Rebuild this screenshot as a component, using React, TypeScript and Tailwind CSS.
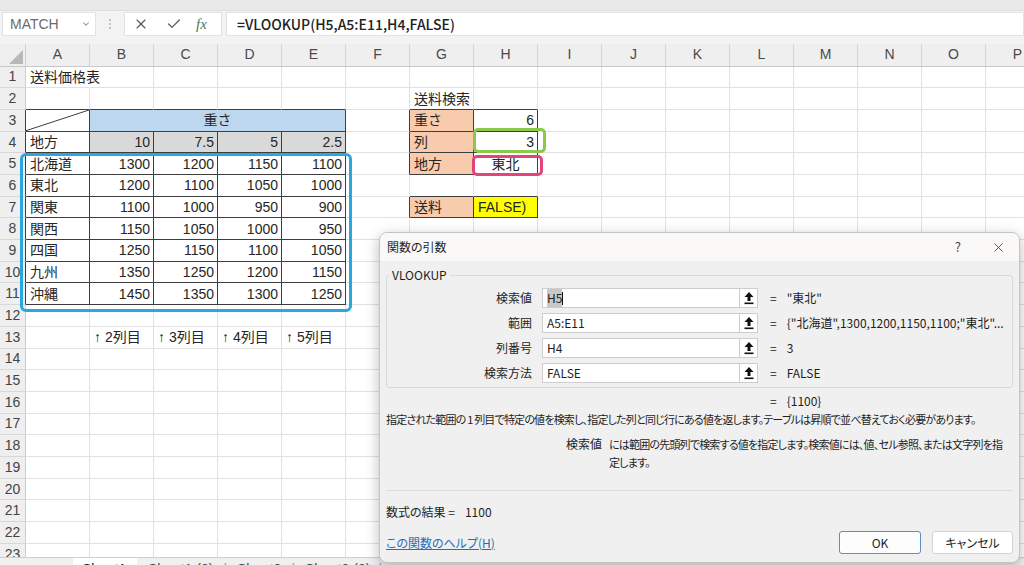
import React from 'react';
import { X, Check, ChevronDown } from 'lucide-react';

type Cell = {
  t?: string;
  span?: number;
  bg?: string;
  al?: 'l' | 'r' | 'c';
  rD?: boolean;
  bD?: boolean;
  noR?: boolean;
  diag?: boolean;
};

const regions = ['北海道', '東北', '関東', '関西', '四国', '九州', '沖縄'];
const prices = [
  [1300, 1200, 1150, 1100],
  [1200, 1100, 1050, 1000],
  [1100, 1000, 950, 900],
  [1150, 1050, 1000, 950],
  [1250, 1150, 1100, 1050],
  [1350, 1250, 1200, 1150],
  [1450, 1350, 1300, 1250],
];
const ORANGE = 'bg-[#f8cbad]';
const COLS = ['A', 'B', 'C', 'D', 'E', 'F', 'G', 'H', 'I', 'J', 'K', 'L', 'M', 'N', 'O', 'P'];

function buildRow(r: number): Cell[] {
  const cells: Cell[] = Array.from({ length: 16 }, () => ({}));
  for (let c = 0; c < 5; c++) {
    if (r >= 2 && r <= 11) cells[c].bD = true;
    if (r >= 3 && r <= 11) cells[c].rD = true;
  }
  if ([3, 4, 5, 7].includes(r)) {
    cells[5].rD = true;
    cells[6].rD = true;
    cells[7].rD = true;
  }
  if (r >= 2 && r <= 7) {
    cells[6].bD = true;
    cells[7].bD = true;
  }
  if (r === 1) {
    cells[0].t = '送料価格表';
    cells[0].noR = true;
  }
  if (r === 2) cells[6].t = '送料検索';
  if (r === 3) {
    cells[0].diag = true;
    cells[6].t = '重さ';
    cells[6].bg = ORANGE;
    cells[7].t = '6';
    cells[7].al = 'r';
  }
  if (r === 4) {
    cells[0].t = '地方';
    ['10', '7.5', '5', '2.5'].forEach((v, i) => {
      cells[i + 1].t = v;
      cells[i + 1].al = 'r';
      cells[i + 1].bg = 'bg-[#d9d9d9]';
    });
    cells[6].t = '列';
    cells[6].bg = ORANGE;
    cells[7].t = '3';
    cells[7].al = 'r';
  }
  if (r >= 5 && r <= 11) {
    cells[0].t = regions[r - 5];
    prices[r - 5].forEach((v, i) => {
      cells[i + 1].t = String(v);
      cells[i + 1].al = 'r';
    });
  }
  if (r === 5) {
    cells[6].t = '地方';
    cells[6].bg = ORANGE;
    cells[7].t = '東北';
    cells[7].al = 'c';
  }
  if (r === 7) {
    cells[6].t = '送料';
    cells[6].bg = ORANGE;
    cells[7].t = 'FALSE)';
    cells[7].bg = 'bg-[#ffff00]';
  }
  if (r === 13) {
    ['↑ 2列目', '↑ 3列目', '↑ 4列目', '↑ 5列目'].forEach((v, i) => {
      cells[i + 1].t = v;
    });
  }
  if (r === 3) {
    const merged: Cell = { t: '重さ', span: 4, bg: 'bg-[#bdd7ee]', al: 'c', rD: true, bD: true };
    cells.splice(1, 4, merged);
  }
  return cells;
}

function CellView({ c }: { c: Cell }) {
  const w = c.span === 4 ? 'w-[256px]' : 'w-[64px]';
  const br = c.rD ? 'border-r-[#3e3e3e]' : c.noR ? 'border-r-transparent' : 'border-r-[#e1e1e1]';
  const bb = c.bD ? 'border-b-[#3e3e3e]' : 'border-b-[#e1e1e1]';
  const al = c.al === 'r' ? 'justify-end pr-[3px]' : c.al === 'c' ? 'justify-center' : 'justify-start pl-[4px]';
  return (
    <div className={`relative shrink-0 h-full flex items-center whitespace-nowrap border-r border-b ${w} ${br} ${bb} ${c.bg ?? ''} ${al}`}>
      {c.diag && (
        <svg className="absolute inset-0 w-full h-full" viewBox="0 0 64 21" preserveAspectRatio="none">
          <line x1="0" y1="21" x2="64" y2="0" stroke="#3e3e3e" strokeWidth="1" vectorEffect="non-scaling-stroke" />
        </svg>
      )}
      {c.t && <span className="leading-none">{c.t}</span>}
    </div>
  );
}

function UpArrow() {
  return (
    <svg width="10" height="14" viewBox="0 0 10 14">
      <polygon points="5,1 9.5,6 6.5,6 6.5,10 3.5,10 3.5,6 0.5,6" fill="#111" />
      <rect x="0.5" y="11.5" width="9" height="1.6" fill="#111" />
    </svg>
  );
}

const fields: { label: string; value: React.ReactNode; result: string }[] = [
  {
    label: '検索値',
    value: (
      <>
        <span className="bg-[#c8c8c8]">H5</span>
        <span className="inline-block w-[1px] h-[13px] bg-[#111] align-middle" />
      </>
    ),
    result: '"東北"',
  },
  { label: '範囲', value: 'A5:E11', result: '{"北海道",1300,1200,1150,1100;"東北"...' },
  { label: '列番号', value: 'H4', result: '3' },
  { label: '検索方法', value: 'FALSE', result: 'FALSE' },
];

export default function App() {
  const rows = Array.from({ length: 23 }, (_, i) => i + 1);
  return (
    <div className="relative w-[1024px] h-[565px] overflow-hidden bg-white font-['Liberation_Sans','Noto_Sans_CJK_JP',sans-serif] text-[#262626]">
      {/* top strip */}
      <div className="h-[11px] bg-[#e9e9e9] border-b border-[#dedede]" />
      {/* formula bar */}
      <div className="h-[26px] bg-[#f3f3f3] flex items-center">
        <div className="ml-[2px] w-[94px] h-[24px] bg-white border border-[#e3e3e3] flex items-center pl-[7px] pr-[4px] text-[14px] text-[#6b6b6b]">
          <span>MATCH</span>
          <ChevronDown className="ml-auto" size={10} color="#8a8a8a" strokeWidth={2.5} />
        </div>
        <svg className="ml-[12px]" width="4" height="14" viewBox="0 0 4 14">
          <circle cx="2" cy="3" r="1" fill="#b5b5b5" />
          <circle cx="2" cy="7" r="1" fill="#b5b5b5" />
          <circle cx="2" cy="11" r="1" fill="#b5b5b5" />
        </svg>
        <div className="ml-[12px] w-[98px] h-[24px] bg-white border border-[#e3e3e3] flex items-center">
          <X className="ml-[8px]" size={16} color="#555" strokeWidth={1.6} />
          <Check className="ml-[17px]" size={16} color="#555" strokeWidth={1.8} />
          <span className="ml-[14px] italic font-['Liberation_Serif',serif] text-[15px] text-[#4a7a55]">fx</span>
        </div>
        <div className="ml-[4px] flex-1 h-[24px] bg-white border border-[#e3e3e3] flex items-center pl-[10px] font-['Noto_Sans_CJK_JP',sans-serif] font-medium text-[14px] text-[#222]">
          =VLOOKUP(H5,A5:E11,H4,FALSE)
        </div>
      </div>
      <div className="h-[7px] bg-[#f3f3f3]" />
      {/* grid */}
      <div className="h-[513px] overflow-hidden text-[14px]">
        <div className="flex h-[22.6px] bg-[#efefef] border-b border-[#c9c9c9]">
          <div className="w-[26px] shrink-0 h-full border-r border-[#d0d0d0] flex items-end justify-end p-[2px]">
            <svg width="14" height="14" viewBox="0 0 14 14">
              <polygon points="0,14 14,14 14,0" fill="#b8b8b8" />
            </svg>
          </div>
          {COLS.map((c) => (
            <div key={c} className="w-[64px] shrink-0 h-full border-r border-[#d4d4d4] flex items-center justify-center text-[#4a4a4a]">
              {c}
            </div>
          ))}
        </div>
        {rows.map((r) => (
          <div key={r} className="flex h-[21.7px]">
            <div
              className={`w-[26px] shrink-0 h-full bg-[#efefef] border-r border-b border-b-[#d8d8d8] ${r >= 3 && r <= 11 ? 'border-r-[#3e3e3e]' : 'border-r-[#cfcfcf]'} flex items-center justify-center text-[#444]`}
            >
              {r}
            </div>
            {buildRow(r).map((c, i) => (
              <CellView key={i} c={c} />
            ))}
          </div>
        ))}
      </div>
      {/* sheet tabs */}
      <div className="h-[30px] bg-[#f0f0f0] border-t border-[#cfcfcf] flex text-[14px] text-[#444] leading-[20px]">
        <div className="w-[73px] shrink-0" />
        <div className="w-[64px] shrink-0 bg-white pl-[9px] pt-[1px] text-[#1e1e1e]">Sheet1</div>
        <div className="flex pl-[11px] pt-[1px] whitespace-nowrap">
          <span>Sheet1 (2)</span>
          <span className="mx-[10px] text-[#9a9a9a]">|</span>
          <span>Sheet2</span>
          <span className="mx-[10px] text-[#9a9a9a]">|</span>
          <span>Sheet2 (2)</span>
          <span className="mx-[8px] text-[#9a9a9a]">|</span>
        </div>
      </div>

      {/* highlight overlays on sheet */}
      <div className="absolute left-[20px] top-[153px] w-[332px] h-[159px] border-[3px] border-[#2aa7df] rounded-[6px]" />
      <div className="absolute left-[473px] top-[128px] w-[73px] h-[25px] border-[3px] border-[#8cc84b] rounded-[5px]" />
      <div className="absolute left-[472px] top-[155px] w-[71px] h-[21px] border-[3px] border-[#e2457c] rounded-[5px]" />

      {/* dialog */}
      <div className="absolute left-[379px] top-[232px] w-[641px] h-[331px] rounded-[8px] border border-[#c4c4c4] bg-[#f0f0f0] shadow-[0_4px_14px_rgba(0,0,0,0.28)] overflow-hidden flex flex-col font-['Noto_Sans_CJK_JP',sans-serif] text-[12px] text-[#1e1e1e] [font-feature-settings:'palt']">
        <div className="h-[28px] shrink-0 bg-[#fbf9f8] flex items-center pl-[7px] pr-[13px]">
          <span>関数の引数</span>
          <span className="ml-auto mr-[30px] text-[13px] text-[#444]">?</span>
          <X size={15} color="#333" strokeWidth={1.3} />
        </div>
        <div className="px-[6px] flex flex-col">
          <fieldset className="mt-[6px] border border-[#d9d9d9] rounded-[3px] pt-[5px] pb-[4px]">
            <legend className="ml-[2px] px-[3px] leading-[16px]">VLOOKUP</legend>
            <div className="flex flex-col gap-[5px]">
              {fields.map((f) => (
                <div key={f.label} className="flex items-center h-[20px]">
                  <div className="w-[145px] text-right">{f.label}</div>
                  <div className="ml-[10px] w-[198px] h-[20px] bg-white border border-[#cdcdcd] flex items-center pl-[4px]">
                    {f.value}
                  </div>
                  <div className="w-[18px] h-[20px] bg-white border border-l-0 border-[#cdcdcd] flex items-center justify-center">
                    <UpArrow />
                  </div>
                  <span className="ml-[12px]">=</span>
                  <span className="ml-[10px] whitespace-nowrap">{f.result}</span>
                </div>
              ))}
            </div>
          </fieldset>
          <div className="mt-[5px] h-[16px] leading-[16px] pl-[384px] whitespace-nowrap">
            =<span className="ml-[10px]">{'{1100}'}</span>
          </div>
          <div className="mt-[2px] leading-[16px] whitespace-nowrap text-[11px] tracking-[-0.8px]">
            指定された範囲の 1 列目で特定の値を検索し、指定した列と同じ行にある値を返します。テーブルは昇順で並べ替えておく必要があります。
          </div>
          <div className="mt-[8px] flex leading-[18px]">
            <div className="w-[223px] shrink-0 pl-[180px]">検索値</div>
            <div className="flex-1 pr-[8px] text-[11px] tracking-[-0.8px]">には範囲の先頭列で検索する値を指定します。検索値には、値、セル参照、または文字列を指定します。</div>
          </div>
          <div className="mt-[19px] border-t border-[#dcdcdc]" />
          <div className="mt-[13px] leading-[16px] whitespace-nowrap">
            数式の結果 =<span className="ml-[10px]">1100</span>
          </div>
          <div className="mt-[11px] flex items-center h-[23px]">
            <span className="text-[#2b6cb5] underline">この関数のヘルプ(H)</span>
            <div className="ml-auto w-[82px] h-[23px] bg-[#fdfdfd] border border-[#5a8fc4] rounded-[3px] flex items-center justify-center">OK</div>
            <div className="ml-[11px] w-[81px] h-[23px] bg-white border border-[#d4d4d4] rounded-[3px] flex items-center justify-center">キャンセル</div>
          </div>
        </div>
      </div>
    </div>
  );
}
